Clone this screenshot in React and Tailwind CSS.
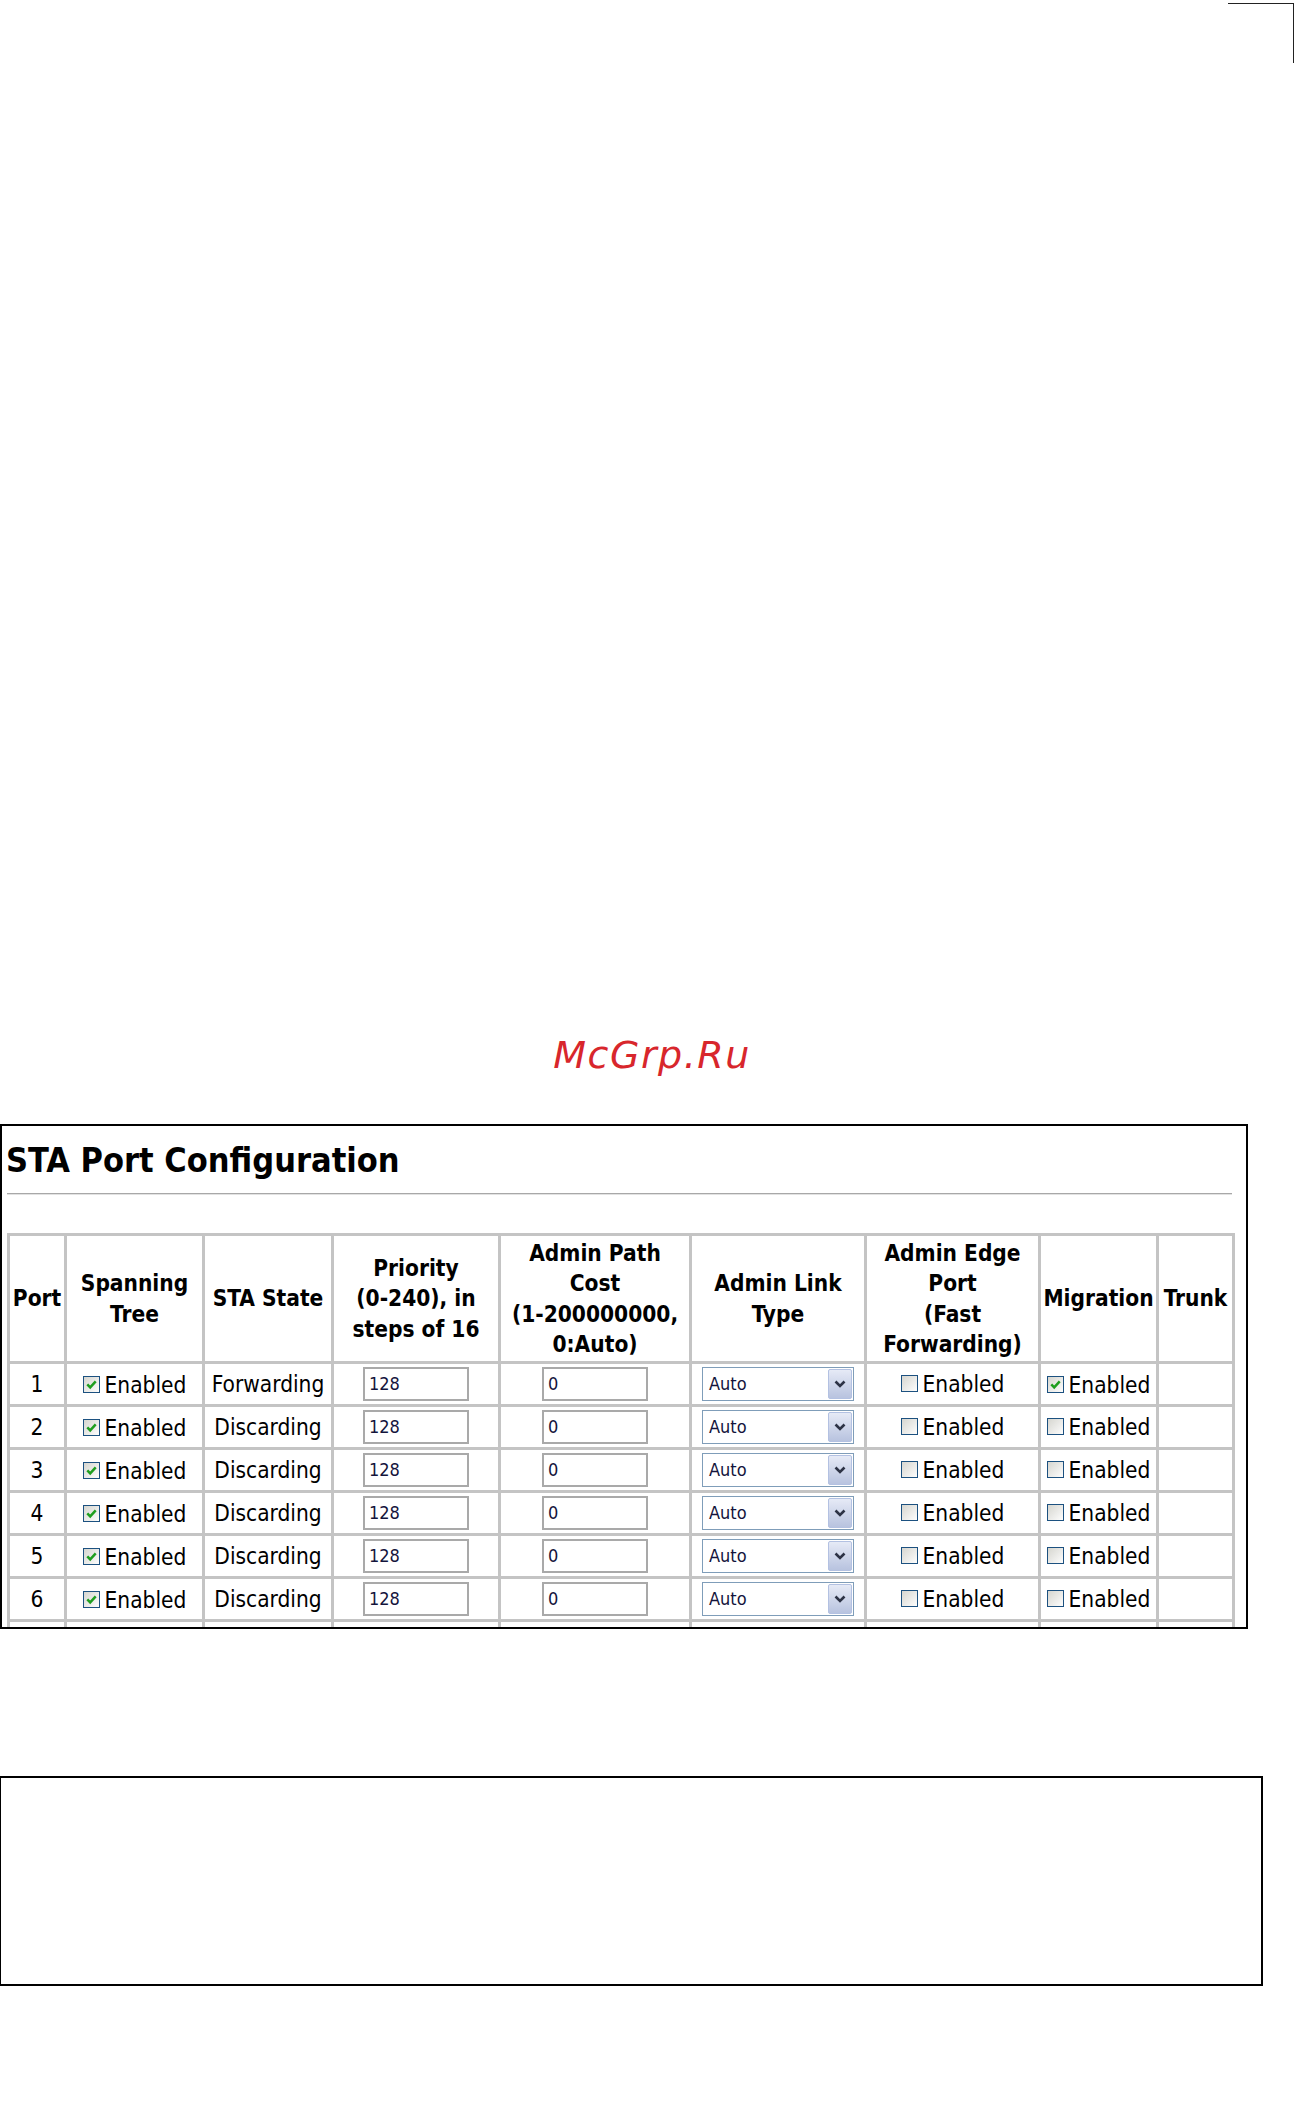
const rows = [
  { port: 1, state: "Forwarding", migration: true },
  { port: 2, state: "Discarding", migration: false },
  { port: 3, state: "Discarding", migration: false },
  { port: 4, state: "Discarding", migration: false },
  { port: 5, state: "Discarding", migration: false },
  { port: 6, state: "Discarding", migration: false },
];

const colWidths = [57, 138, 129, 167, 191, 175, 174, 118, 76];

function CheckBox({ checked }) {
  return (
    <span className="inline-flex h-[17px] w-[17px] shrink-0 items-center justify-center border border-[#1c5180] bg-linear-to-br from-[#d6d6d0] to-[#fdfdfd]">
      {checked && (
        <svg width="13" height="13" viewBox="0 0 13 13">
          <path d="M2.3 6.4 L5.2 9.4 L10.7 3.4" fill="none" stroke="#1f9e1f" strokeWidth="2.5" />
        </svg>
      )}
    </span>
  );
}

function EnabledBox({ checked }) {
  return (
    <span className="inline-flex items-center gap-[5px]">
      <CheckBox checked={checked} />
      <span>Enabled</span>
    </span>
  );
}

function TextBox({ value }) {
  return (
    <div className="mx-auto flex h-[34px] w-[106px] items-center border-2 border-[#a9a9a9] bg-white pl-[4px] text-left text-[18px] text-[#14143c]">
      {value}
    </div>
  );
}

function ComboBox({ value }) {
  return (
    <div className="mx-auto flex h-[34px] w-[152px] items-stretch border border-[#7f9db9] bg-white p-[1px]">
      <div className="flex flex-1 items-center pl-[5px] text-left text-[18px] text-[#14143c]">{value}</div>
      <div className="flex w-[24px] items-center justify-center rounded-[2px] border border-[#b3c1e2] bg-linear-to-b from-[#e6eaf6] to-[#b8c3df]">
        <svg width="14" height="12" viewBox="0 0 14 12">
          <path d="M2.5 3.5 L7 8 L11.5 3.5" fill="none" stroke="#2d3346" strokeWidth="2.6" />
        </svg>
      </div>
    </div>
  );
}

export default function App() {
  const th = "h-[128px] border-[3px] border-[#c4c4c4] p-0 text-center align-middle font-bold whitespace-nowrap";
  const td = "h-[43px] border-[3px] border-[#c4c4c4] p-0 text-center align-middle whitespace-nowrap";

  return (
    <div className="h-[2107px] w-[1296px] overflow-hidden bg-white font-['DejaVu_Sans_Condensed','Liberation_Sans',sans-serif] text-black">
      {/* crop mark */}
      <div className="ml-auto mr-[2px] mt-[3px] h-[60px] w-[66px] border-r-[1.5px] border-t-[1.5px] border-[#222]" />

      <div className="mt-[973px] pl-[8px] text-center font-['DejaVu_Sans',sans-serif] text-[38px] leading-[38px] italic tracking-[1.5px] text-[#d8262c]">
        McGrp.Ru
      </div>

      <section className="mt-[50px] h-[505px] w-[1248px] overflow-hidden border-2 border-black">
        <h1 className="mt-[17px] pl-[4px] text-[34px] leading-[34px] font-bold">STA Port Configuration</h1>
        <div className="ml-[5px] mt-[16px] h-[2px] w-[1225px] border-b border-t border-b-[#e2e2e2] border-t-[#a8a8a8]" />

        <table className="ml-[5px] mt-[38px] table-fixed border-collapse border-[3px] border-[#c4c4c4] text-[22.5px] leading-[26px]" style={{ width: 1225 }}>
          <colgroup>
            {colWidths.map((w, i) => (
              <col key={i} style={{ width: w }} />
            ))}
          </colgroup>
          <thead className="text-[22.5px] leading-[30.5px]">
            <tr>
              <th className={th}>Port</th>
              <th className={th}>
                Spanning
                <br />
                Tree
              </th>
              <th className={th}>STA State</th>
              <th className={th}>
                Priority
                <br />
                (0-240), in
                <br />
                steps of 16
              </th>
              <th className={th}>
                Admin Path
                <br />
                Cost
                <br />
                (1-200000000,
                <br />
                0:Auto)
              </th>
              <th className={th}>
                Admin Link
                <br />
                Type
              </th>
              <th className={th}>
                Admin Edge
                <br />
                Port
                <br />
                (Fast
                <br />
                Forwarding)
              </th>
              <th className={th}>Migration</th>
              <th className={th}>Trunk</th>
            </tr>
          </thead>
          <tbody>
            {rows.map((r) => (
              <tr key={r.port}>
                <td className={td}>{r.port}</td>
                <td className={td}>
                  <EnabledBox checked />
                </td>
                <td className={td}>{r.state}</td>
                <td className={td}>
                  <TextBox value="128" />
                </td>
                <td className={td}>
                  <TextBox value="0" />
                </td>
                <td className={td}>
                  <ComboBox value="Auto" />
                </td>
                <td className={td}>
                  <EnabledBox checked={false} />
                </td>
                <td className={td}>
                  <EnabledBox checked={r.migration} />
                </td>
                <td className={td} />
              </tr>
            ))}
            {/* next row, cut off by the frame */}
            <tr>
              {colWidths.map((w, i) => (
                <td key={i} className={td} />
              ))}
            </tr>
          </tbody>
        </table>
      </section>

      <div className="mt-[147px] h-[210px] w-[1263px] border-2 border-l border-black" />
    </div>
  );
}
